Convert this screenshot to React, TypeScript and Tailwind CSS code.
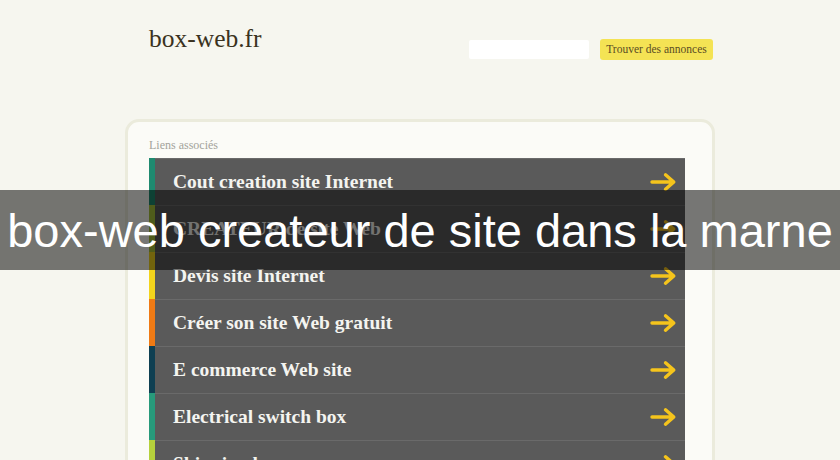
import React from "react";

const rows = [
  { label: "Cout creation site Internet", color: "bg-[#1f8a70]" },
  { label: "CREATEUR de site Web", color: "bg-[#a8c43a]" },
  { label: "Devis site Internet", color: "bg-[#f3d41c]" },
  { label: "Créer son site Web gratuit", color: "bg-[#ef7a14]" },
  { label: "E commerce Web site", color: "bg-[#0e3f52]" },
  { label: "Electrical switch box", color: "bg-[#279a7b]" },
  { label: "Shipping box", color: "bg-[#b5d13c]" },
];

function Arrow() {
  return (
    <svg width="27" height="20" viewBox="0 0 27 20" fill="none">
      <path
        d="M2 10 H23.5 M15.5 2.8 L23.8 10 L15.5 17.2"
        stroke="#f5c41c"
        strokeWidth="3.4"
        strokeLinecap="round"
        strokeLinejoin="round"
      />
    </svg>
  );
}

export default function App() {
  return (
    <div className="relative w-[840px] h-[460px] overflow-hidden bg-[#f6f6ef]">
      <div className="mx-auto w-[590px]">
        <div className="flex items-center h-[78px] pl-[24px]">
          <div
            className="text-[25.5px] leading-none text-[#3a3220] -mt-[1px]"
            style={{ fontFamily: '"Liberation Serif", serif' }}
          >
            box-web.fr
          </div>
          <div className="ml-auto flex items-center gap-[11px] pr-[2px] mt-[21px]">
            <div className="w-[120px] h-[19px] bg-white rounded-[2px]" />
            <div
              className="h-[21px] w-[113px] flex items-center justify-center bg-[#f4e354] rounded-[3px] text-[11.5px] text-[#5a4c24]"
              style={{ fontFamily: '"Liberation Serif", serif' }}
            >
              Trouver des annonces
            </div>
          </div>
        </div>
        <div className="mt-[41px] border-[3px] border-[#ebebdc] rounded-[14px] bg-[#fbfbf7] pl-[21px] pr-[27px] pt-[16px] h-[400px]">
          <div
            className="text-[12px] leading-[14px] text-[#a3a39b]"
            style={{ fontFamily: '"Liberation Serif", serif' }}
          >
            Liens associés
          </div>
          <div className="mt-[6px] flex flex-col">
            {rows.map((r) => (
              <div key={r.label} className="flex h-[47px]">
                <div className={`w-[6px] ${r.color}`} />
                <div className="flex-1 flex items-center bg-[#5a5a5a] border-t border-[#6a6a6a] pl-[18px] pr-[8px]">
                  <span
                    className="text-[19.5px] font-bold text-[#f4f4f0]"
                    style={{ fontFamily: '"Liberation Serif", serif' }}
                  >
                    {r.label}
                  </span>
                  <span className="ml-auto flex items-center">
                    <Arrow />
                  </span>
                </div>
              </div>
            ))}
          </div>
        </div>
      </div>
      <div className="absolute left-0 top-[190px] w-full h-[80px] bg-[rgba(0,0,0,0.53)] flex items-center justify-center">
        <span
          className="text-white text-[47px] leading-none"
          style={{ fontFamily: '"Liberation Sans", Arial, sans-serif' }}
        >
          box-web createur de site dans la marne
        </span>
      </div>
    </div>
  );
}
